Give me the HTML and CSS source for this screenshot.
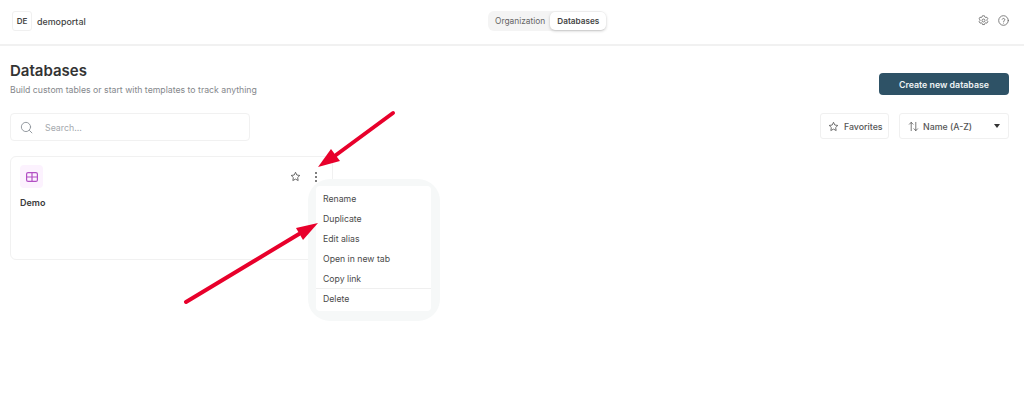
FILE: index.html
```html
<!DOCTYPE html>
<html lang="en">
<head>
<meta charset="utf-8">
<title>Databases</title>
<link rel="stylesheet" href="styles.css">
</head>
<body>
<header class="topbar">
  <div class="brand">
    <span class="avatar">DE</span>
    <span class="brand-name">demoportal</span>
  </div>
  <nav class="tabs">
    <span class="tab">Organization</span>
    <span class="tab tab-active">Databases</span>
  </nav>
  <div class="top-icons">
    <svg class="top-icon" viewBox="0 0 24 24" fill="none" stroke="#666" stroke-width="1.8" stroke-linejoin="round"><path d="M12 1.500l2.200.3.8 2.700 1.700 1 2.700-.7 2.100 3.400-1.900 2.100v2l1.900 2.100-2.100 3.400-2.700-.7-1.700 1-.8 2.700h-4.400l-.8-2.700-1.700-1-2.700.7-2.100-3.400 1.900-2.100v-2L2.200 8.200l2.100-3.400 2.700.7 1.700-1 .8-2.700z"/><circle cx="12" cy="12" r="3.200"/></svg>
    <svg class="top-icon" viewBox="0 0 24 24" fill="none" stroke="#666" stroke-width="1.800" stroke-linecap="round"><circle cx="12" cy="12" r="10.500"/><path d="M9.200 9.300a2.900 2.900 0 0 1 5.600 1c0 1.900-2.800 2.400-2.800 4"/><path d="M12 17.600v.1"/></svg>
  </div>
</header>

<main class="page">
  <div class="title-row">
    <div>
      <h1 class="title">Databases</h1>
      <p class="subtitle">Build custom tables or start with templates to track anything</p>
    </div>
    <button class="create-btn">Create new database</button>
  </div>

  <div class="filter-row">
    <div class="search">
      <svg class="search-icon" viewBox="0 0 24 24" fill="none" stroke="#8b9299" stroke-width="1.700" stroke-linecap="round"><circle cx="11" cy="11" r="8.500"/><path d="M17.500 17.500l4.500 4.500"/></svg>
      <span class="search-text">Search...</span>
    </div>
    <div class="filter-actions">
      <button class="ctl ctl-fav">
        <svg class="ctl-icon" viewBox="0 0 24 24" fill="none" stroke="#555" stroke-width="1.800" stroke-linejoin="round"><path d="M12 2.800l2.900 6 6.500.9-4.700 4.600 1.100 6.500-5.800-3.100-5.800 3.100 1.100-6.500-4.700-4.600 6.500-.9z"/></svg>
        Favorites
      </button>
      <button class="ctl ctl-sort">
        <svg class="ctl-icon" viewBox="0 0 24 24" fill="none" stroke="#555" stroke-width="1.700" stroke-linecap="round" stroke-linejoin="round"><path d="M7 21V3M3 7l4-4 4 4M17 3v18M13 17l4 4 4-4"/></svg>
        <span class="sort-label">Name (A-Z)</span>
        <span class="caret"></span>
      </button>
    </div>
  </div>

  <div class="card">
    <div class="card-top">
      <span class="db-icon">
        <svg viewBox="0 0 12 10" width="12" height="10" fill="none" stroke="#b24fc4" stroke-width="1.200"><rect x=".6" y=".6" width="10.800" height="8.800" rx="1.500"/><path d="M.6 5h10.800M6 .6v8.800"/></svg>
      </span>
      <div class="card-actions">
        <svg class="card-star" viewBox="0 0 24 24" fill="none" stroke="#555" stroke-width="1.900" stroke-linejoin="round"><path d="M12 2.800l2.900 6 6.500.9-4.700 4.600 1.100 6.500-5.800-3.100-5.800 3.100 1.100-6.500-4.700-4.600 6.500-.9z"/></svg>
        <span class="dots"><i></i><i></i><i></i></span>
      </div>
    </div>
    <div class="card-name">Demo</div>
  </div>
</main>

<div class="menu-halo">
  <ul class="menu">
    <li>Rename</li>
    <li>Duplicate</li>
    <li>Edit alias</li>
    <li>Open in new tab</li>
    <li>Copy link</li>
    <li class="menu-delete">Delete</li>
  </ul>
</div>

<svg class="arrows" viewBox="0 0 1024 419" width="1024" height="419">
  <path d="M393 113L336 155" stroke="#e8002b" stroke-width="4" stroke-linecap="round" fill="none"/>
  <path d="M318 167L331 149L340 161Z" fill="#e8002b"/>
  <path d="M186 302L299 234" stroke="#e8002b" stroke-width="4" stroke-linecap="round" fill="none"/>
  <path d="M318 223L296 228L303 240Z" fill="#e8002b"/>
</svg>
</body>
</html>
```

FILE: styles.css
```css
* { box-sizing: border-box; }
html, body { margin: 0; height: 100%; }
body {
  position: relative;
  width: 1024px;
  height: 419px;
  overflow: hidden;
  background: #fff;
  font-family: Inter, "Liberation Sans", sans-serif;
  color: #3a3a3a;
}
.topbar {
  height: 46px;
  padding: 0 15px 2px 12px;
  border-bottom: 2px solid #f1f1f1;
  display: grid;
  grid-template-columns: 476px auto 1fr;
  align-items: center;
}
.brand { display: flex; align-items: center; gap: 5px; }
.avatar {
  width: 20px;
  height: 20px;
  border: 1px solid #f0f0f0;
  border-radius: 3px;
  display: flex;
  align-items: center;
  justify-content: center;
  font-size: 8px;
  font-weight: 600;
  color: #444;
}
.brand-name { font-size: 8.900px; font-weight: 500; color: #3f3f3f; }
.tabs {
  display: flex;
  align-items: center;
  height: 20px;
  background: #f4f4f4;
  border-radius: 6px;
  margin-top: -1px;
}
.tab { padding: 0 5px 0 7px; font-size: 8.400px; color: #666; line-height: 20px; }
.tab-active {
  padding: 0;
  width: 56px;
  font-size: 8.200px;
  text-align: center;
  background: #fff;
  border-radius: 5px;
  height: 18px;
  line-height: 18px;
  font-weight: 600;
  color: #444;
  box-shadow: 0 1px 3px rgba(0,0,0,.22);
}
.top-icons { display: flex; justify-content: flex-end; gap: 9px; margin-top: -1px; }
.top-icon { width: 11px; height: 11px; display: block; }

.page { padding: 16px 15px 0 10px; }
.title-row { display: flex; justify-content: space-between; align-items: flex-start; }
.title { margin: 0; font-size: 15px; line-height: 18px; font-weight: 600; color: #333; }
.subtitle { margin: 4px 0 0; font-size: 8.720px; line-height: 12px; color: #85888c; }
.create-btn {
  margin-top: 11px;
  width: 130px;
  height: 22px;
  border: 0;
  border-radius: 4px;
  background: #2e5266;
  color: #eef2f4;
  font: 600 8.800px Inter, "Liberation Sans", sans-serif;
}
.filter-row {
  margin-top: 17px;
  display: flex;
  justify-content: space-between;
  align-items: flex-start;
}
.search {
  width: 240px;
  height: 28px;
  border: 1px solid #f1f1f1;
  border-radius: 4px;
  display: flex;
  align-items: center;
  padding-left: 9px;
  gap: 12px;
}
.search-icon { width: 13px; height: 13px; }
.search-text { font-size: 8.800px; color: #a5a9ae; }
.filter-actions { display: flex; gap: 10px; }
.ctl {
  height: 26px;
  background: #fff;
  border: 1px solid #f0f0f0;
  border-radius: 3px;
  display: flex;
  align-items: center;
  font: 500 8.800px Inter, "Liberation Sans", sans-serif;
  color: #555;
  padding: 0;
}
.ctl-icon { width: 11px; height: 11px; flex: none; }
.ctl-fav { width: 69px; padding-left: 7px; gap: 5px; }
.ctl-sort { width: 110px; padding-left: 8px; gap: 4px; }
.sort-label { flex: 1; text-align: left; }
.caret {
  width: 0;
  height: 0;
  margin-right: 8px;
  border-left: 3px solid transparent;
  border-right: 3px solid transparent;
  border-top: 4px solid #333;
}
.card {
  margin-top: 15px;
  width: 323px;
  height: 104px;
  border: 1px solid #f1f1f1;
  border-radius: 6px;
  padding: 8px 9px 0;
}
.card-top { display: flex; justify-content: space-between; align-items: center; }
.db-icon {
  width: 23px;
  height: 23px;
  background: #fcf2fe;
  border-radius: 4px;
  display: flex;
  align-items: center;
  justify-content: center;
}
.card-actions { display: flex; align-items: center; gap: 14px; padding-right: 6px; }
.card-star { width: 11px; height: 11px; }
.dots { display: flex; flex-direction: column; gap: 2px; }
.dots i { width: 2px; height: 2px; border-radius: 50%; background: #555; display: block; }
.card-name { margin-top: 9px; font-size: 9px; line-height: 12px; font-weight: 600; color: #3a3a3a; }

.menu-halo {
  position: absolute;
  left: 308px;
  top: 179px;
  width: 132px;
  height: 142px;
  padding: 7px 9px 10px 8px;
  background: #f6f8f8;
  border-radius: 22px;
}
.menu {
  list-style: none;
  margin: 0;
  padding: 3px 0;
  height: 125px;
  background: #fff;
  border-radius: 4px;
}
.menu li {
  height: 20px;
  line-height: 20px;
  padding-left: 7px;
  font-size: 8.700px;
  color: #4a4a4a;
}
.menu .menu-delete { border-top: 1px solid #efefef; height: 21px; margin-top: -1px; }
.arrows { position: absolute; left: 0; top: 0; pointer-events: none; }
```
